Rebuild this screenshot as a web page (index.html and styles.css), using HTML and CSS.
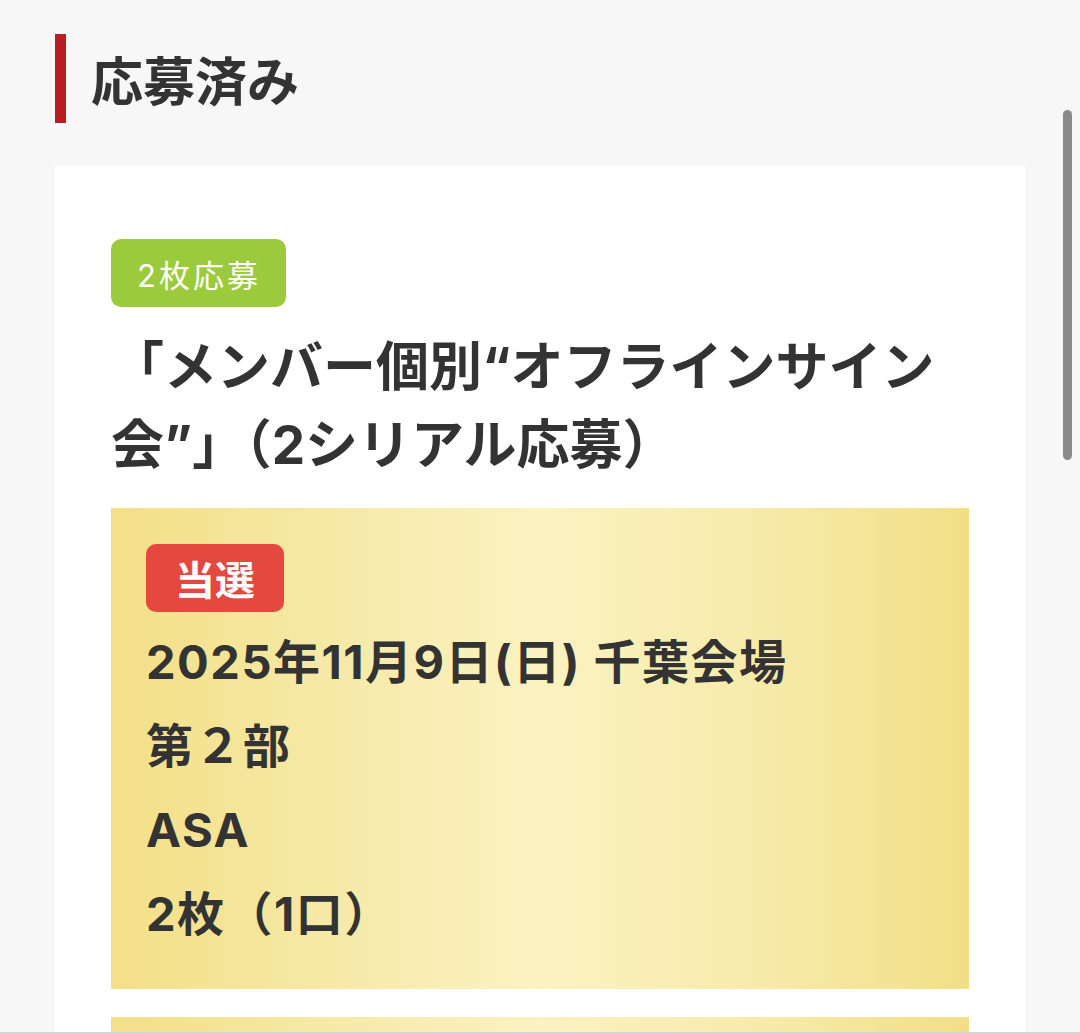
FILE: index.html
```html
<!DOCTYPE html>
<html lang="ja">
<head>
<meta charset="utf-8">
<title>応募済み</title>
<link rel="stylesheet" href="styles.css">
</head>
<body>
<div class="page">
  <h2 class="section-title">応募済み</h2>
  <div class="card">
    <span class="count-badge">2枚応募</span>
    <h3 class="event-title">「メンバー個別“オフラインサイン会”」（2シリアル応募）</h3>
    <div class="result">
      <span class="win-badge">当選</span>
      <ul class="result-list">
        <li>2025年11月9日(日) 千葉会場</li>
        <li>第２部</li>
        <li>ASA</li>
        <li>2枚（1口）</li>
      </ul>
    </div>
    <div class="result result-next"></div>
  </div>
</div>
<div class="scrollbar"></div>
<div class="bottom-edge"></div>
</body>
</html>
```

FILE: styles.css
```css
html, body {
  margin: 0;
  padding: 0;
}
body {
  background: #f7f7f7;
  color: #333333;
  font-family: Inter, "Noto Sans CJK JP", sans-serif;
  overflow: hidden;
  height: 1034px;
}
.page {
  padding: 34px 0 0 55px;
  width: 970px;
}
.section-title {
  margin: 0 0 43px;
  height: 89px;
  line-height: 89px;
  border-left: 11px solid #b91c24;
  padding-left: 25px;
  font-family: "Noto Sans CJK JP", sans-serif;
  font-size: 52px;
  font-weight: 700;
  color: #333333;
}
.card {
  background: #ffffff;
  padding: 73px 56px 28px;
}
.count-badge {
  display: flex;
  align-items: center;
  width: fit-content;
  height: 68px;
  padding: 0 25px 0 26px;
  box-sizing: border-box;
  border-radius: 10px;
  background: #9bcb3c;
  color: #ffffff;
  font-size: 31px;
  font-weight: 400;
  letter-spacing: 3px;
}
.event-title {
  margin: 21px 0 24px;
  font-size: 53px;
  line-height: 78px;
  font-weight: 700;
  color: #333333;
}
.result {
  background: linear-gradient(90deg, #f3df86 0%, #f7ebac 30%, #faf2c1 50%, #f7ebab 75%, #f1df86 100%);
  padding: 36px 35px 33px;
  margin-bottom: 28px;
}
.result-next {
  height: 120px;
}
.win-badge {
  display: flex;
  align-items: center;
  justify-content: center;
  width: 138px;
  height: 68px;
  box-sizing: border-box;
  border-radius: 10px;
  background: #e5483f;
  color: #ffffff;
  font-family: "Noto Sans CJK JP", sans-serif;
  font-size: 40px;
  font-weight: 700;
}
.result-list {
  list-style: none;
  margin: 8px 0 0;
  padding: 0;
}
.result-list li {
  font-size: 47px;
  line-height: 84px;
  font-weight: 700;
  letter-spacing: 1.5px;
  color: #333333;
  white-space: nowrap;
}
.scrollbar {
  position: fixed;
  left: 1063px;
  top: 110px;
  width: 9px;
  height: 350px;
  border-radius: 5px;
  background: #8a8a8a;
}
.bottom-edge {
  position: fixed;
  left: 0;
  right: 0;
  bottom: 0;
  height: 2px;
  background: #d4d4d4;
}
```
